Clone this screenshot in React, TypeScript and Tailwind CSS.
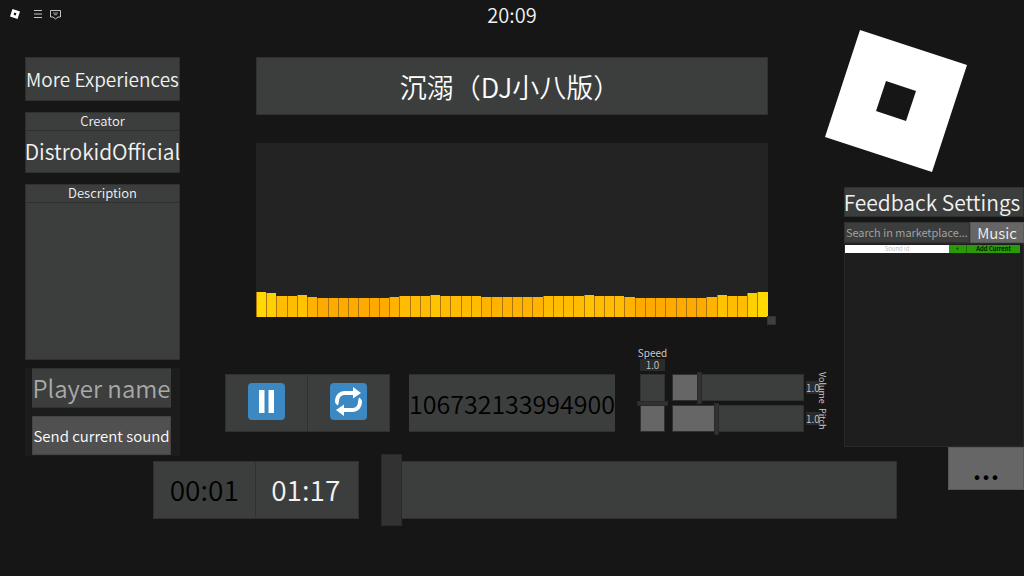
import { useState } from 'react';

const HALF = [25, 24, 21, 21, 22, 20, 19, 19, 19, 19, 19, 19, 19, 20, 21, 21, 21, 22, 21, 21, 21, 21, 20, 20, 20];
const BARS = [...HALF, ...[...HALF].reverse()];

const BAR_COLORS: Record<number, string> = {
  25: 'bg-[#ffd900]',
  24: 'bg-[#ffd000]',
  22: 'bg-[#ffc300]',
  21: 'bg-[#ffbc00]',
  20: 'bg-[#ffb300]',
  19: 'bg-[#ffaa00]',
};

const panel = 'border border-[#2f3030] bg-[#3c3e3d]';
const field = 'border-y border-[#2f3030] bg-[#3c3e3d]';
const thumb =
  '[&::-webkit-slider-thumb]:shrink-0 [&::-webkit-slider-thumb]:appearance-none [&::-webkit-slider-thumb]:border [&::-webkit-slider-thumb]:border-[#2a2a2a] [&::-webkit-slider-thumb]:bg-[#323232]';

function RobloxMark({ className }: { className: string }) {
  return (
    <svg viewBox="0 0 142 142" className={className} aria-hidden="true">
      <path
        fillRule="evenodd"
        d="M35 0 142 35 107 142 0 107ZM61 51 51 81 81 91 91 61Z"
        fill="currentColor"
      />
    </svg>
  );
}

function TopBar() {
  return (
    <header className="grid h-[30px] grid-cols-3 items-start">
      <div className="flex h-[28px] items-center pl-[10px]">
        <RobloxMark className="size-[10px] text-white" />
        <button type="button" aria-label="Menu" className="ml-[13px] text-[#c4c4c4]">
          <svg viewBox="0 0 10 10" className="size-[10px]" stroke="currentColor" fill="none">
            <path d="M1 1.5h8M1 5h8M1 8.5h8" />
          </svg>
        </button>
        <button type="button" aria-label="Chat" className="ml-[7px] text-[#c4c4c4]">
          <svg viewBox="0 0 11 11" className="size-[11px]" stroke="currentColor" fill="none">
            <path d="M.5 1.500h10v6.500H8L5.500 10 3 8H.5Z" strokeLinejoin="round" />
            <path d="M3 4h5M4 5.700h3" strokeWidth=".8" />
          </svg>
        </button>
      </div>
      <time className="text-center text-xl leading-[30px]">20:09</time>
    </header>
  );
}

function Sidebar() {
  return (
    <aside className="w-[155px] shrink-0 pt-[27px]">
      <button type="button" className={`${panel} flex h-[44px] w-full items-center justify-center pt-px text-[19px]`}>
        More Experiences
      </button>
      <section className="mt-[11px]">
        <h2 className={`${panel} flex h-[18px] items-center justify-center border-b-0 pb-px text-[13px] leading-4`}>
          Creator
        </h2>
        <p className={`${panel} flex h-[43px] items-center justify-center text-[21px]`}>DistrokidOfficial</p>
      </section>
      <section className="mt-[11px]">
        <h2 className={`${panel} flex h-[18px] items-center justify-center border-b-0 pb-px text-[13px] leading-4`}>
          Description
        </h2>
        <div className={`${panel} h-[158px]`} />
      </section>
      <form className="mt-[8px] bg-[#1c1c1c] pr-[9px] pb-px pl-[7px]">
        <input
          aria-label="Player name"
          placeholder="Player name"
          className={`${field} block h-[40px] w-full pb-px text-center text-2xl placeholder:text-[#a9a9a9]`}
        />
        <button
          type="button"
          className="mt-[8px] flex h-[39px] w-full items-center justify-center border border-[#444] bg-[#505050] pt-px text-[15px] text-white"
        >
          Send current sound
        </button>
      </form>
    </aside>
  );
}

function Visualizer() {
  return (
    <div className="relative mt-[28px] flex h-[174px] items-end bg-[#232323]">
      {BARS.map((h, i) => (
        <div key={i} className={`flex-1 border-l border-[#a8760c] ${BAR_COLORS[h]}`} style={{ height: h }} />
      ))}
      <div className="absolute -right-[8px] -bottom-[8px] size-[9px] border border-[#333] bg-[#3f3f3f]" />
    </div>
  );
}

function RowSlider({ label, value, fill }: { label: string; value: number; fill: string }) {
  return (
    <div className="flex h-[27px] items-center">
      <input
        type="range"
        aria-label={label}
        defaultValue={value}
        className={`${thumb} ${fill} h-full w-[132px] appearance-none border border-[#2f3030] bg-[#3c3e3d] [&::-webkit-slider-thumb]:h-[32px] [&::-webkit-slider-thumb]:w-[5px]`}
      />
      <output className="ml-[2px] bg-[#2b2b2b] text-[10px] leading-[13px] text-[#c8c8c8]">1.0</output>
      <span className="flex w-[6px] items-center justify-center text-[9px] leading-[9px] font-normal text-[#c8c8c8] [writing-mode:vertical-rl]">
        {label}
      </span>
    </div>
  );
}

function Controls() {
  const [paused, setPaused] = useState(false);
  const [looped, setLooped] = useState(true);

  return (
    <div className="mt-[30px] ml-[45px] flex items-end">
      <div className={`${panel} flex h-[58px] w-[165px] shrink-0`}>
        <button
          type="button"
          aria-label="Pause"
          aria-pressed={paused}
          onClick={() => setPaused(!paused)}
          className="flex flex-1 items-center justify-center border-r border-[#2f3030] pb-[4px]"
        >
          <svg viewBox="0 0 37 37" className="size-[37px]">
            <rect width="37" height="37" rx="4" fill="#3b88c3" />
            <path d="M11 7h5.500v23H11ZM20.500 7H26v23h-5.500Z" fill="#fff" />
          </svg>
        </button>
        <button
          type="button"
          aria-label="Repeat"
          aria-pressed={looped}
          onClick={() => setLooped(!looped)}
          className="flex flex-1 items-center justify-center pb-[4px]"
        >
          <svg viewBox="0 0 37 37" className="size-[37px]">
            <rect width="37" height="37" rx="4" fill="#3b88c3" />
            <path
              d="M5 19C5 12 9 8 15 8H23V4L31 10 23 15.500V12H15C11 12 9 14.500 9 18.500L8 22.500Q5.500 21.500 5 19Z"
              fill="#fff"
            />
            <path
              d="M32 18C32 25 28 29 22 29H14V33L6 27 14 21.500V25H22C26 25 28 22.500 28 18.500L29 14.500Q31.500 15.500 32 18Z"
              fill="#fff"
            />
          </svg>
        </button>
      </div>

      <input
        aria-label="Sound ID"
        defaultValue="106732133994900"
        className={`${field} ml-[19px] h-[58px] w-[206px] shrink-0 text-center text-[25px] text-black`}
      />

      <div className="ml-[25px] flex w-[25px] shrink-0 flex-col items-center text-[#c8c8c8]">
        <label htmlFor="speed" className="text-[10px] leading-[12px] font-normal">Speed</label>
        <output className="w-full bg-[#2b2b2b] text-center text-[10px] leading-[12px]">1.0</output>
        <input
          id="speed"
          type="range"
          defaultValue={49}
          className={`${thumb} mt-[3px] h-[58px] w-full appearance-none border border-[#2f3030] bg-[#3c3e3d] bg-[linear-gradient(to_top,#666_50%,transparent_50%)] [direction:rtl] [writing-mode:vertical-lr] [&::-webkit-slider-thumb]:h-[5px] [&::-webkit-slider-thumb]:w-[31px]`}
        />
      </div>

      <div className="ml-[7px] flex flex-col gap-[4px]">
        <RowSlider label="Volume" value={19} fill="bg-[linear-gradient(to_right,#666_20%,transparent_20%)]" />
        <RowSlider label="Pitch" value={33} fill="bg-[linear-gradient(to_right,#666_33%,transparent_33%)]" />
      </div>
    </div>
  );
}

function Marketplace() {
  return (
    <aside className="flex w-[199px] shrink-0 flex-col items-end">
      <RobloxMark className="mr-auto size-[142px] text-white" />
      <div className="mt-[15px] w-[180px]">
        <h2 className={`${panel} flex h-[30px] items-center justify-center pr-[4px] text-[21px] leading-[26px]`}>
          Feedback Settings
        </h2>
        <div className="mt-[5px] flex h-[21px]">
          <input
            aria-label="Search in marketplace"
            placeholder="Search in marketplace..."
            className={`${panel} min-w-0 flex-1 px-px pb-px text-[11px] placeholder:text-[#a9a9a9]`}
          />
          <button type="button" className="w-[54px] border border-[#585858] bg-[#666] pb-px text-[15px] leading-none">
            Music
          </button>
        </div>
        <div className="h-[204px] border border-[#292929] bg-[#1e1e1e]">
          <div className="mt-px mr-[3px] flex h-[8px] text-[6px] leading-[8px]">
            <input
              aria-label="Sound id"
              placeholder="Sound id"
              className="min-w-0 flex-1 bg-white text-center text-black placeholder:text-[#b8b8b8]"
            />
            <button type="button" className="w-[18px] border-r border-[#1c6e05] bg-[#299a08] text-black">+</button>
            <button type="button" className="w-[53px] bg-[#299a08] font-medium text-black">Add Current</button>
          </div>
        </div>
      </div>
    </aside>
  );
}

function Timeline() {
  return (
    <footer className="flex items-start pl-[153px]">
      <div className={`${panel} mt-[5px] flex h-[58px] w-[206px] items-center pr-[2px] pb-[2px] text-center text-[28px]`}>
        <time className="flex h-full flex-1 items-center justify-center border-r border-[#2f3030] text-black">00:01</time>
        <time className="flex-1">01:17</time>
      </div>
      <input
        type="range"
        aria-label="Position"
        defaultValue={0}
        className={`${thumb} mt-[5px] ml-[22px] h-[58px] min-w-0 flex-1 appearance-none border border-l-0 border-[#2f3030] bg-[#3c3e3d] [&::-webkit-slider-thumb]:h-[72px] [&::-webkit-slider-thumb]:w-[21px]`}
      />
      <button
        type="button"
        aria-label="More"
        className="-mt-[9px] ml-[51px] h-[43px] w-[76px] border border-[#585858] bg-[#666] pb-[4px] text-[30px] leading-[32px] font-medium text-black"
      >
        ...
      </button>
    </footer>
  );
}

export default function App() {
  return (
    <div className="min-h-screen overflow-hidden bg-[#161616] font-['Noto_Sans_CJK_SC',sans-serif] font-[350] whitespace-nowrap text-[#f2f2f2]">
      <TopBar />
      <main className="flex items-start pl-[25px]">
        <Sidebar />
        <div className="min-w-0 flex-1 pt-[27px]">
          <div className="mr-[57px] ml-[76px]">
            <h1 className={`${panel} flex h-[58px] items-center justify-center pt-[2px] pr-[4px] text-[27px] text-white`}>
              沉溺（DJ小八版）
            </h1>
            <Visualizer />
          </div>
          <Controls />
        </div>
        <Marketplace />
      </main>
      <Timeline />
    </div>
  );
}
